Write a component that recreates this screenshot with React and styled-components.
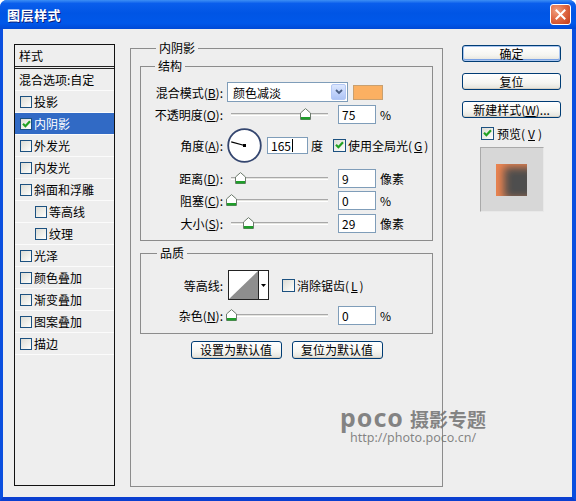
import React from 'react';
import styled, { createGlobalStyle } from 'styled-components';

const GlobalStyle = createGlobalStyle`
  html, body { margin: 0; padding: 0; background: #fff; }
  body {
    font-family: "Noto Sans CJK SC", "Noto Sans", sans-serif;
    font-size: 12px;
    color: #000;
  }
  * { box-sizing: border-box; }
`;

const Window = styled.div`
  position: relative;
  width: 576px;
  height: 501px;
  display: flex;
  flex-direction: column;
  background: #0055e5;
  border-radius: 7px 7px 0 0;
  overflow: hidden;
`;

const TitleBar = styled.div`
  flex: none;
  height: 29px;
  display: flex;
  align-items: center;
  justify-content: space-between;
  padding: 0 5px 0 7px;
  background: linear-gradient(
    to bottom,
    #3d8ff5 0%,
    #0a5eec 12%,
    #0055e5 45%,
    #0058ea 80%,
    #0049d6 100%
  );
`;

const Title = styled.span`
  color: #fff;
  font-size: 13px;
  font-weight: bold;
  letter-spacing: 0.5px;
  text-shadow: 1px 1px 0 #0a1e7a;
`;

const CloseButton = styled.div`
  width: 21px;
  height: 21px;
  border: 1px solid #fff;
  border-radius: 3px;
  background: radial-gradient(circle at 30% 30%, #f0a080 0%, #e06a45 45%, #c23a18 100%);
  display: flex;
  align-items: center;
  justify-content: center;
`;

const Frame = styled.div`
  flex: 1;
  display: flex;
  align-items: flex-start;
  background: #eeeeee;
  border-left: 3px solid #0a4fdf;
  border-right: 4px solid #0a4fdf;
  border-bottom: 4px solid #0a3fd0;
  padding: 15px 0 0 11px;
`;

/* ---------- left list ---------- */

const StyleList = styled.div`
  flex: none;
  width: 101px;
  height: 442px;
  border: 1px solid #111;
  background: #eeeeee;
  display: flex;
  flex-direction: column;
`;

const ListHeader = styled.div`
  height: 24px;
  line-height: 21px;
  padding-left: 4px;
  border-bottom: 3px double #222;
`;

const ListItem = styled.div`
  height: 22px;
  display: flex;
  align-items: center;
  gap: 2px;
  padding-left: ${p => p.$indent}px;
  border-bottom: 1px solid #fbfbfb;
  background: ${p => (p.$active ? '#316ac5' : 'transparent')};
  color: ${p => (p.$active ? '#fff' : '#000')};
`;

const Box = styled.span`
  flex: none;
  width: ${p => p.$size}px;
  height: ${p => p.$size}px;
  border: 1px solid #1c5180;
  background: linear-gradient(135deg, #dcdcd5 0%, #f4f4f0 70%, #fff 100%);
  display: inline-flex;
  align-items: center;
  justify-content: center;
`;

const Check = ({ checked, size = 12 }) => (
  <Box $size={size}>
    {checked && (
      <svg width="9" height="8" viewBox="0 0 9 8">
        <path d="M1 3.8 L3.4 6.2 L8 1.2" fill="none" stroke="#21a121" strokeWidth="2.2" />
      </svg>
    )}
  </Box>
);

/* ---------- centre panel ---------- */

const GroupBox = styled.fieldset`
  margin: ${p => p.$margin || 0};
  padding: ${p => p.$pad || 0};
  border: 1px solid #8c8c8c;
  min-width: 0;
  width: ${p => p.$w};
  height: ${p => p.$h}px;
  flex: none;
`;

const Legend = styled.legend`
  margin-left: ${p => p.$offset}px;
  padding: 0 3px;
  line-height: 14px;
  font-size: 12px;
`;

const Row = styled.div`
  display: flex;
  align-items: center;
  height: ${p => p.$h || 22}px;
  margin-top: ${p => p.$mt || 0}px;
`;

const Label = styled.span`
  flex: none;
  width: 82px;
  text-align: right;
  white-space: nowrap;
`;

const U = styled.span`
  text-decoration: underline;
`;

const Select = styled.div`
  flex: none;
  margin-left: 4px;
  width: 121px;
  height: 20px;
  border: 1px solid #7f9db9;
  background: #fff;
  display: flex;
  align-items: center;
  justify-content: space-between;
  padding: 1px 1px 1px 5px;
`;

const DropArrow = styled.span`
  width: 15px;
  height: 16px;
  border: 1px solid #b4c8f5;
  border-radius: 2px;
  background: linear-gradient(to bottom, #dde8fe 0%, #c4d5fb 50%, #aec4f5 100%);
  display: flex;
  align-items: center;
  justify-content: center;
`;

const Swatch = styled.span`
  flex: none;
  margin-left: 5px;
  width: 30px;
  height: 15px;
  background: #fbb062;
  border: 1px solid #c8a070;
`;

const SliderWrap = styled.div`
  position: relative;
  flex: none;
  margin-left: 4px;
  width: 104px;
  height: 14px;
`;

const Track = styled.div`
  position: absolute;
  left: 4px;
  right: 3px;
  top: 6px;
  height: 3px;
  border-top: 1px solid #a8a8a8;
  border-bottom: 1px solid #fff;
  background: #e4e4e0;
`;

const Thumb = styled.svg`
  position: absolute;
  top: 1px;
`;

const Slider = ({ pos }) => (
  <SliderWrap>
    <Track />
    <Thumb width="11" height="12" viewBox="0 0 11 12" style={{ left: pos - 1.5 }}>
      <path d="M0.5 11.5 V5 L5.5 0.6 L10.5 5 V11.5 Z" fill="#fff" stroke="#6d7b6d" />
      <rect x="1" y="9" width="9" height="2.5" fill="#1f9e2a" />
    </Thumb>
  </SliderWrap>
);

const Input = styled.div`
  flex: none;
  margin-left: ${p => p.$ml || 7}px;
  width: ${p => p.$w || 38}px;
  height: ${p => p.$h || 19}px;
  border: 1px solid #7f9db9;
  background: #fff;
  padding-left: 3px;
  display: flex;
  align-items: center;
`;

const Caret = styled.span`
  display: inline-block;
  width: 1px;
  height: 13px;
  background: #000;
  margin-left: 1px;
`;

const Unit = styled.span`
  margin-left: ${p => p.$ml || 4}px;
`;

const Dial = styled.svg`
  flex: none;
  margin-left: 4px;
`;

const InlineCheck = styled.span`
  display: inline-flex;
  align-items: center;
  gap: 2px;
  margin-left: ${p => p.$ml || 0}px;
`;

const ContourBox = styled.div`
  flex: none;
  margin-left: 5px;
  width: 41px;
  height: 30px;
  border: 1px solid #222;
  background: #fff;
  display: flex;
`;

const ContourArrow = styled.span`
  flex: 1;
  border-left: 1px solid #222;
  display: flex;
  align-items: center;
  justify-content: center;
`;

const ButtonRow = styled.div`
  display: flex;
  justify-content: center;
  gap: 10px;
  margin-top: 7px;
`;

const XPButton = styled.div`
  width: ${p => p.$w}px;
  height: ${p => p.$h || 18}px;
  border: 1px solid #003c74;
  border-radius: 3px;
  background: linear-gradient(to bottom, #ffffff 0%, #f5f5f1 60%, #e3e2da 100%);
  box-shadow: ${p =>
    p.$default
      ? 'inset 0 0 0 1px #a8c4ee, inset 0 -1px 0 1px #7aa2e4'
      : 'inset 0 -1px 0 #d6d0c4'};
  display: flex;
  align-items: center;
  justify-content: center;
  line-height: 1;
  white-space: nowrap;
`;

/* ---------- right column ---------- */

const Side = styled.div`
  flex: none;
  margin-left: 19px;
  width: 99px;
  display: flex;
  flex-direction: column;
  align-items: center;
  gap: 11px;
  padding-top: 1px;
`;

const PreviewToggle = styled.div`
  display: flex;
  align-items: center;
  gap: 3px;
  height: 14px;
  margin-top: -3px;
`;

const PreviewBox = styled.div`
  width: 64px;
  height: 65px;
  margin-top: -4px;
  border: 1px solid #a9a9a9;
  border-right-color: #e8e8e8;
  border-bottom-color: #e8e8e8;
  background: #d7d7d7;
  display: flex;
  align-items: center;
  justify-content: center;
`;

const PreviewSwatch = styled.div`
  width: 31px;
  height: 32px;
  background: #4e4e4e;
  box-shadow: inset 8px 3px 9px rgba(245, 135, 80, 0.95);
`;

/* ---------- watermark ---------- */

const Watermark = styled.div`
  position: absolute;
  left: 340px;
  top: 406px;
  color: rgba(112, 112, 112, 0.85);
  font-family: "Noto Sans", "Noto Sans CJK SC", sans-serif;
  pointer-events: none;
`;

const MarkTop = styled.div`
  display: flex;
  align-items: baseline;
  gap: 6px;
  height: 22px;
`;

const MarkLogo = styled.span`
  font-size: 25px;
  font-weight: bold;
  letter-spacing: 1px;
  line-height: 22px;
`;

const MarkCn = styled.span`
  font-family: "Noto Sans CJK SC", sans-serif;
  font-size: 19px;
  font-weight: bold;
  line-height: 22px;
`;

const MarkUrl = styled.div`
  margin: 3px 0 0 10px;
  font-size: 12.5px;
  line-height: 13px;
`;

const effects = [
  { name: '投影', indent: 5 },
  { name: '内阴影', indent: 5, checked: true, active: true },
  { name: '外发光', indent: 5 },
  { name: '内发光', indent: 5 },
  { name: '斜面和浮雕', indent: 5 },
  { name: '等高线', indent: 20 },
  { name: '纹理', indent: 20 },
  { name: '光泽', indent: 5 },
  { name: '颜色叠加', indent: 5 },
  { name: '渐变叠加', indent: 5 },
  { name: '图案叠加', indent: 5 },
  { name: '描边', indent: 5 },
];

const App = () => (
  <>
    <GlobalStyle />
    <Window>
      <TitleBar>
        <Title>图层样式</Title>
        <CloseButton>
          <svg width="11" height="11" viewBox="0 0 11 11">
            <path d="M1.5 1.5 L9.5 9.5 M9.5 1.5 L1.5 9.5" stroke="#fff" strokeWidth="2" strokeLinecap="square" />
          </svg>
        </CloseButton>
      </TitleBar>

      <Frame>
        <StyleList>
          <ListHeader>样式</ListHeader>
          <ListItem $indent={4}>混合选项:自定</ListItem>
          {effects.map(e => (
            <ListItem key={e.name} $indent={e.indent} $active={e.active}>
              <Check checked={e.checked} size={12} />
              {e.name}
            </ListItem>
          ))}
        </StyleList>

        <GroupBox $w="313px" $h={446} $margin="-3px 0 0 15px" $pad="0 9px">
          <Legend $offset={16}>内阴影</Legend>

          <GroupBox $w="100%" $h={182} $margin="4px 0 0 0">
            <Legend $offset={14}>结构</Legend>
            <Row $mt={8}>
              <Label>混合模式(<U>B</U>):</Label>
              <Select>
                <span>颜色减淡</span>
                <DropArrow>
                  <svg width="8" height="6" viewBox="0 0 8 6">
                    <path d="M1 1 L4 4 L7 1" fill="none" stroke="#4d6185" strokeWidth="1.8" />
                  </svg>
                </DropArrow>
              </Select>
              <Swatch />
            </Row>
            <Row>
              <Label>不透明度(<U>O</U>):</Label>
              <Slider pos={74} />
              <Input>75</Input>
              <Unit>%</Unit>
            </Row>
            <Row $h={34} $mt={3}>
              <Label>角度(<U>A</U>):</Label>
              <Dial width="35" height="35" viewBox="0 0 35 35">
                <circle cx="17.5" cy="17.5" r="16.3" fill="#fff" stroke="#34466f" strokeWidth="1.8" />
                <line x1="17.5" y1="17.5" x2="4.2" y2="13.9" stroke="#000" strokeWidth="1.2" />
                <rect x="16" y="16" width="3" height="3" fill="#000" />
              </Dial>
              <Input $ml={5} $w={41} $h={17}>
                165<Caret />
              </Input>
              <Unit $ml={3}>度</Unit>
              <InlineCheck $ml={10}>
                <Check checked size={13} />
                使用全局光(<U>G</U>)
              </InlineCheck>
            </Row>
            <Row $mt={5}>
              <Label>距离(<U>D</U>):</Label>
              <Slider pos={9} />
              <Input>9</Input>
              <Unit>像素</Unit>
            </Row>
            <Row>
              <Label>阻塞(<U>C</U>):</Label>
              <Slider pos={0} />
              <Input>0</Input>
              <Unit>%</Unit>
            </Row>
            <Row $mt={1}>
              <Label>大小(<U>S</U>):</Label>
              <Slider pos={17} />
              <Input>29</Input>
              <Unit>像素</Unit>
            </Row>
          </GroupBox>

          <GroupBox $w="100%" $h={88} $margin="5px 0 0 0">
            <Legend $offset={16}>品质</Legend>
            <Row $h={30} $mt={10}>
              <Label>等高线:</Label>
              <ContourBox>
                <svg width="29" height="28" viewBox="0 0 29 28">
                  <path d="M0 28 L29 0 L29 28 Z" fill="#8e8e8e" />
                </svg>
                <ContourArrow>
                  <svg width="5" height="3" viewBox="0 0 5 3">
                    <path d="M0 0 L5 0 L2.5 3 Z" fill="#000" />
                  </svg>
                </ContourArrow>
              </ContourBox>
              <InlineCheck $ml={13}>
                <Check size={13} />
                消除锯齿(<U>L</U>)
              </InlineCheck>
            </Row>
            <Row $mt={4}>
              <Label>杂色(<U>N</U>):</Label>
              <Slider pos={0} />
              <Input>0</Input>
              <Unit>%</Unit>
            </Row>
          </GroupBox>

          <ButtonRow>
            <XPButton $w={91}>设置为默认值</XPButton>
            <XPButton $w={91}>复位为默认值</XPButton>
          </ButtonRow>
        </GroupBox>

        <Side>
          <XPButton $w={99} $h={17} $default>确定</XPButton>
          <XPButton $w={99} $h={17}>复位</XPButton>
          <XPButton $w={99} $h={17}>新建样式(<U>W</U>)...</XPButton>
          <PreviewToggle>
            <Check checked size={13} />
            预览(<U>V</U>)
          </PreviewToggle>
          <PreviewBox>
            <PreviewSwatch />
          </PreviewBox>
        </Side>
      </Frame>

      <Watermark>
        <MarkTop>
          <MarkLogo>poco</MarkLogo>
          <MarkCn>摄影专题</MarkCn>
        </MarkTop>
        <MarkUrl>http://photo.poco.cn/</MarkUrl>
      </Watermark>
    </Window>
  </>
);

export default App;
